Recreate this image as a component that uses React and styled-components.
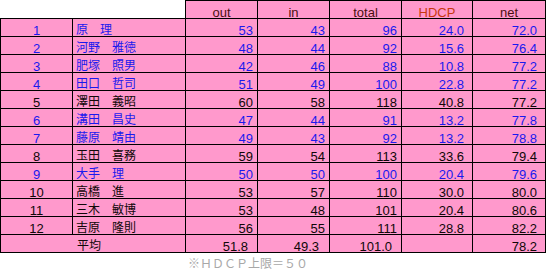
import React from "react";
import styled, { createGlobalStyle } from "styled-components";

const GlobalStyle = createGlobalStyle`
  body {
    margin: 0;
    background: #fff;
    font-family: "Liberation Sans", "Noto Sans CJK JP", sans-serif;
  }
`;

const rows = [
  [1, "原　理", 53, 43, 96, "24.0", "72.0", true],
  [2, "河野　雅徳", 48, 44, 92, "15.6", "76.4", true],
  [3, "肥塚　照男", 42, 46, 88, "10.8", "77.2", true],
  [4, "田口　哲司", 51, 49, 100, "22.8", "77.2", true],
  [5, "澤田　義昭", 60, 58, 118, "40.8", "77.2", false],
  [6, "溝田　昌史", 47, 44, 91, "13.2", "77.8", true],
  [7, "藤原　靖由", 49, 43, 92, "13.2", "78.8", true],
  [8, "玉田　喜務", 59, 54, 113, "33.6", "79.4", false],
  [9, "大手　理", 50, 50, 100, "20.4", "79.6", true],
  [10, "高橋　進", 53, 57, 110, "30.0", "80.0", false],
  [11, "三木　敏博", 53, 48, 101, "20.4", "80.6", false],
  [12, "吉原　隆則", 56, 55, 111, "28.8", "82.2", false],
];

const Page = styled.div`
  width: 548px;
`;

const Sheet = styled.table`
  border-collapse: collapse;
  table-layout: fixed;
  width: 545px;
  font-size: 13px;
`;

const Row = styled.tr`
  height: 18px;
  color: ${(p) => (p.$blue ? "#1a1aee" : "#100808")};
`;

const Cell = styled.td`
  background: #ff99cc;
  border: 1px solid #000;
  padding: 0 ${(p) => p.$pad || 0}px 0 ${(p) => p.$left || 0}px;
  height: 17px;
  line-height: ${(p) => (p.$jp ? "14px" : "11px")};
  vertical-align: bottom;
  white-space: nowrap;
  text-align: ${(p) => p.$align || "right"};
  font-family: ${(p) =>
    p.$jp
      ? '"Noto Sans CJK JP", sans-serif'
      : '"Liberation Sans", "Noto Sans CJK JP", sans-serif'};
  font-size: ${(p) => (p.$jp ? "12px" : "13px")};
`;

const Blank = styled.td`
  border: none;
  background: #fff;
`;

const Head = styled(Cell)`
  text-align: center;
  color: ${(p) => (p.$hot ? "#c8380e" : "#4a1010")};
`;

const Note = styled.div`
  margin-top: 4px;
  padding-left: 188px;
  font-family: "Noto Sans CJK JP", sans-serif;
  font-size: 12px;
  line-height: 12px;
  color: #a8a8a8;
`;

export default function App() {
  return (
    <Page>
      <GlobalStyle />
      <Sheet>
        <colgroup>
          <col style={{ width: 72 }} />
          <col style={{ width: 113 }} />
          <col style={{ width: 72 }} />
          <col style={{ width: 72 }} />
          <col style={{ width: 72 }} />
          <col style={{ width: 71 }} />
          <col style={{ width: 73 }} />
        </colgroup>
        <tbody>
          <Row>
            <Blank />
            <Blank />
            <Head>out</Head>
            <Head>in</Head>
            <Head>total</Head>
            <Head $hot>HDCP</Head>
            <Head>net</Head>
          </Row>
          {rows.map(([no, name, out, inn, total, hdcp, net, blue]) => (
            <Row key={no} $blue={blue}>
              <Cell $align="center">{no}</Cell>
              <Cell $jp $align="left" $left={3}>
                {name}
              </Cell>
              <Cell $pad={4}>{out}</Cell>
              <Cell $pad={4}>{inn}</Cell>
              <Cell $pad={4}>{total}</Cell>
              <Cell $pad={8}>{hdcp}</Cell>
              <Cell $pad={8}>{net}</Cell>
            </Row>
          ))}
          <Row>
            <Cell colSpan={2} $jp $align="left" $left={76}>
              平均
            </Cell>
            <Cell $pad={9}>51.8</Cell>
            <Cell $pad={10}>49.3</Cell>
            <Cell $pad={9}>101.0</Cell>
            <Cell $pad={8}></Cell>
            <Cell $pad={8}>78.2</Cell>
          </Row>
        </tbody>
      </Sheet>
      <Note>※ＨＤＣＰ上限＝５０</Note>
    </Page>
  );
}
